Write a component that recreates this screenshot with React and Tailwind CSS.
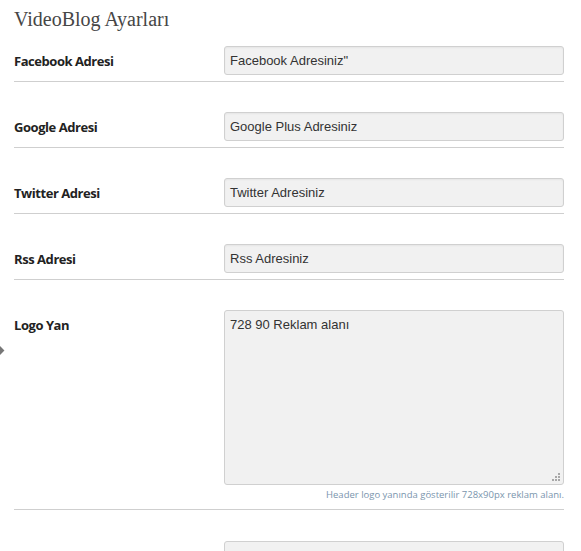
import React from "react";

const fieldText = "font-['Liberation_Sans',Arial,sans-serif] text-[13px] text-[#333]";
const labelCls = "w-[210px] shrink-0 pt-[2px] leading-[27px] text-[13px] font-bold text-[#222] font-['Open_Sans',Arial,sans-serif] tracking-[-0.45px]";

function Row({ label, children }) {
  return (
    <div className="flex pt-[30px] border-b border-[#cfcfcf] pb-[6px]">
      <div className={labelCls}>{label}</div>
      <div className="flex-1">{children}</div>
    </div>
  );
}

function Input({ value }) {
  return (
    <div className={`h-[29px] rounded-[3px] border border-[#d0d0d0] bg-[#f1f1f1] pl-[5px] leading-[27px] shadow-[inset_0_1px_2px_rgba(0,0,0,0.05)] ${fieldText}`}>
      {value}
    </div>
  );
}

function TextArea({ value, h }) {
  return (
    <div className={`relative ${h} rounded-[3px] border border-[#d0d0d0] bg-[#f1f1f1] pl-[5px] pt-[6px] leading-[16px] ${fieldText}`}>
      {value}
      <svg className="absolute right-[3px] bottom-[3px]" width="9" height="9" viewBox="0 0 9 9">
        <rect x="7" y="1" width="2" height="2" fill="#a8a8a8" />
        <rect x="4" y="4" width="2" height="2" fill="#a8a8a8" />
        <rect x="7" y="4" width="2" height="2" fill="#a8a8a8" />
        <rect x="1" y="7" width="2" height="2" fill="#a8a8a8" />
        <rect x="4" y="7" width="2" height="2" fill="#a8a8a8" />
        <rect x="7" y="7" width="2" height="2" fill="#a8a8a8" />
      </svg>
    </div>
  );
}

export default function App() {
  return (
    <div className="relative w-[581px] h-[551px] overflow-hidden bg-white">
      <div className="absolute left-[-4px] top-[347px] w-[7px] h-[7px] rotate-45 bg-[#777]" />
      <h2 className="pl-[14px] pt-[5px] leading-[28px] text-[20px] text-[#464646] font-['Liberation_Serif',Georgia,serif]">
        VideoBlog Ayarları
      </h2>
      <div className="pl-[14px] pr-[17px] -mt-[17px]">
        <Row label="Facebook Adresi"><Input value={'Facebook Adresiniz"'} /></Row>
        <Row label="Google Adresi"><Input value="Google Plus Adresiniz" /></Row>
        <Row label="Twitter Adresi"><Input value="Twitter Adresiniz" /></Row>
        <Row label="Rss Adresi"><Input value="Rss Adresiniz" /></Row>
        <div className="flex pt-[30px] pb-[7px] border-b border-[#cfcfcf]">
          <div className={labelCls}>Logo Yan</div>
          <div className="flex-1">
            <TextArea value="728 90 Reklam alanı" h="h-[175px]" />
            <div className="mt-[3px] text-right text-[9.5px] leading-[14px] text-[#7a95ad] font-['Open_Sans',Arial,sans-serif]">
              Header logo yanında gösterilir 728x90px reklam alanı.
            </div>
          </div>
        </div>
        <div className="flex pt-[31px]">
          <div className={labelCls}>Anasayfa Reklamı</div>
          <div className="flex-1">
            <TextArea value={'<a href="#"><img src="http://" alt="reklam" /></a>'} h="h-[175px]" />
          </div>
        </div>
      </div>
    </div>
  );
}
